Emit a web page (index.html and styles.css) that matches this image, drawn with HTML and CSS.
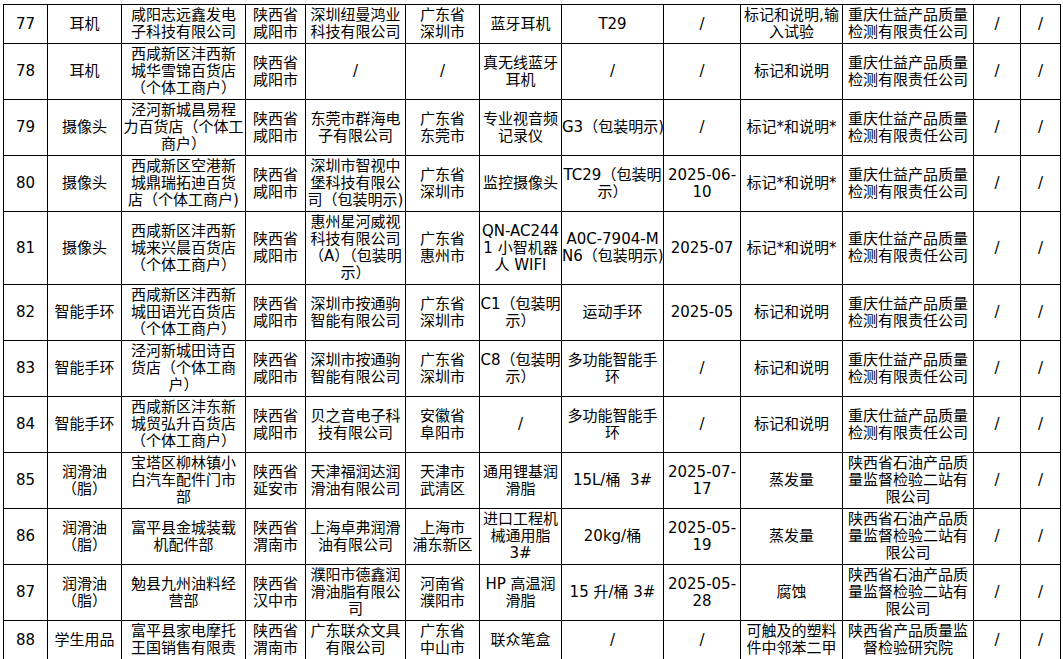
FILE: index.html
```html
<!DOCTYPE html>
<html lang="zh-CN">
<head>
<meta charset="utf-8">
<title>抽查结果</title>
<link rel="stylesheet" href="styles.css">
</head>
<body>
<table class="sheet">
  <colgroup>
    <col class="c-no"><col class="c-prod"><col class="c-seller"><col class="c-area"><col class="c-maker"><col class="c-marea"><col class="c-name"><col class="c-model"><col class="c-date"><col class="c-item"><col class="c-org"><col class="c-x1"><col class="c-x2">
  </colgroup>
  <tbody>
    <tr>
      <td>77</td><td>耳机</td><td>咸阳志远鑫发电<br>子科技有限公司</td><td>陕西省<br>咸阳市</td><td>深圳纽曼鸿业<br>科技有限公司</td><td>广东省<br>深圳市</td><td>蓝牙耳机</td><td>T29</td><td>/</td><td>标记和说明,输<br>入试验</td><td>重庆仕益产品质量<br>检测有限责任公司</td><td>/</td><td>/</td>
    </tr>
    <tr>
      <td>78</td><td>耳机</td><td>西咸新区沣西新<br>城华雪锦百货店<br>（个体工商户）</td><td>陕西省<br>咸阳市</td><td>/</td><td>/</td><td>真无线蓝牙<br>耳机</td><td>/</td><td>/</td><td>标记和说明</td><td>重庆仕益产品质量<br>检测有限责任公司</td><td>/</td><td>/</td>
    </tr>
    <tr>
      <td>79</td><td>摄像头</td><td>泾河新城昌易程<br>力百货店（个体工<br>商户）</td><td>陕西省<br>咸阳市</td><td>东莞市群海电<br>子有限公司</td><td>广东省<br>东莞市</td><td>专业视音频<br>记录仪</td><td>G3（包装明示)</td><td>/</td><td>标记*和说明*</td><td>重庆仕益产品质量<br>检测有限责任公司</td><td>/</td><td>/</td>
    </tr>
    <tr>
      <td>80</td><td>摄像头</td><td>西咸新区空港新<br>城鼎瑞拓迪百货<br>店（个体工商户)</td><td>陕西省<br>咸阳市</td><td>深圳市智视中<br>堡科技有限公<br>司（包装明示)</td><td>广东省<br>深圳市</td><td>监控摄像头</td><td>TC29（包装明<br>示）</td><td>2025-06-<br>10</td><td>标记*和说明*</td><td>重庆仕益产品质量<br>检测有限责任公司</td><td>/</td><td>/</td>
    </tr>
    <tr>
      <td>81</td><td>摄像头</td><td>西咸新区沣西新<br>城来兴晨百货店<br>（个体工商户）</td><td>陕西省<br>咸阳市</td><td>惠州星河威视<br>科技有限公司<br>（A）（包装明<br>示）</td><td>广东省<br>惠州市</td><td>QN-AC244<br>1 小智机器<br>人 WIFI</td><td>A0C-7904-M<br>N6（包装明示)</td><td>2025-07</td><td>标记*和说明*</td><td>重庆仕益产品质量<br>检测有限责任公司</td><td>/</td><td>/</td>
    </tr>
    <tr>
      <td>82</td><td>智能手环</td><td>西咸新区沣西新<br>城田语光百货店<br>（个体工商户）</td><td>陕西省<br>咸阳市</td><td>深圳市按通驹<br>智能有限公司</td><td>广东省<br>深圳市</td><td>C1（包装明<br>示）</td><td>运动手环</td><td>2025-05</td><td>标记和说明</td><td>重庆仕益产品质量<br>检测有限责任公司</td><td>/</td><td>/</td>
    </tr>
    <tr>
      <td>83</td><td>智能手环</td><td>泾河新城田诗百<br>货店（个体工商<br>户）</td><td>陕西省<br>咸阳市</td><td>深圳市按通驹<br>智能有限公司</td><td>广东省<br>深圳市</td><td>C8（包装明<br>示）</td><td>多功能智能手<br>环</td><td>/</td><td>标记和说明</td><td>重庆仕益产品质量<br>检测有限责任公司</td><td>/</td><td>/</td>
    </tr>
    <tr>
      <td>84</td><td>智能手环</td><td>西咸新区沣东新<br>城贸弘升百货店<br>（个体工商户）</td><td>陕西省<br>咸阳市</td><td>贝之音电子科<br>技有限公司</td><td>安徽省<br>阜阳市</td><td>/</td><td>多功能智能手<br>环</td><td>/</td><td>标记和说明</td><td>重庆仕益产品质量<br>检测有限责任公司</td><td>/</td><td>/</td>
    </tr>
    <tr>
      <td>85</td><td>润滑油<br>（脂）</td><td>宝塔区柳林镇小<br>白汽车配件门市<br>部</td><td>陕西省<br>延安市</td><td>天津福润达润<br>滑油有限公司</td><td>天津市<br>武清区</td><td>通用锂基润<br>滑脂</td><td>15L/桶&nbsp; 3#</td><td>2025-07-<br>17</td><td>蒸发量</td><td>陕西省石油产品质<br>量监督检验二站有<br>限公司</td><td>/</td><td>/</td>
    </tr>
    <tr>
      <td>86</td><td>润滑油<br>（脂）</td><td>富平县金城装载<br>机配件部</td><td>陕西省<br>渭南市</td><td>上海卓弗润滑<br>油有限公司</td><td>上海市<br>浦东新区</td><td>进口工程机<br>械通用脂<br>3#</td><td>20kg/桶</td><td>2025-05-<br>19</td><td>蒸发量</td><td>陕西省石油产品质<br>量监督检验二站有<br>限公司</td><td>/</td><td>/</td>
    </tr>
    <tr>
      <td>87</td><td>润滑油<br>（脂）</td><td>勉县九州油料经<br>营部</td><td>陕西省<br>汉中市</td><td>濮阳市德鑫润<br>滑油脂有限公<br>司</td><td>河南省<br>濮阳市</td><td>HP 高温润<br>滑脂</td><td>15 升/桶 3#</td><td>2025-05-<br>28</td><td>腐蚀</td><td>陕西省石油产品质<br>量监督检验二站有<br>限公司</td><td>/</td><td>/</td>
    </tr>
    <tr>
      <td>88</td><td>学生用品</td><td>富平县家电摩托<br>王国销售有限责</td><td>陕西省<br>渭南市</td><td>广东联众文具<br>有限公司</td><td>广东省<br>中山市</td><td>联众笔盒</td><td>/</td><td>/</td><td>可触及的塑料<br>件中邻苯二甲</td><td>陕西省产品质量监<br>督检验研究院</td><td>/</td><td>/</td>
    </tr>
  </tbody>
</table>
</body>
</html>
```

FILE: styles.css
```css
html, body {
  margin: 0;
  padding: 0;
  background: #ffffff;
}

.sheet {
  border-collapse: collapse;
  table-layout: fixed;
  width: 1057px;
  margin: 4px 0 0 3px;
  font-family: "DejaVu Sans", "Noto Sans CJK SC", sans-serif;
  font-size: 15px;
  line-height: 17px;
  color: #000000;
}

.sheet td {
  border: 1px solid #000000;
  padding: 2px 0;
  text-align: center;
  vertical-align: middle;
  white-space: nowrap;
}

.c-no { width: 44px; }
.c-prod { width: 74px; }
.c-seller { width: 124px; }
.c-area { width: 60px; }
.c-maker { width: 100px; }
.c-marea { width: 74px; }
.c-name { width: 82px; }
.c-model { width: 102px; }
.c-date { width: 77px; }
.c-item { width: 102px; }
.c-org { width: 131px; }
.c-x1 { width: 47px; }
.c-x2 { width: 40px; }
```
